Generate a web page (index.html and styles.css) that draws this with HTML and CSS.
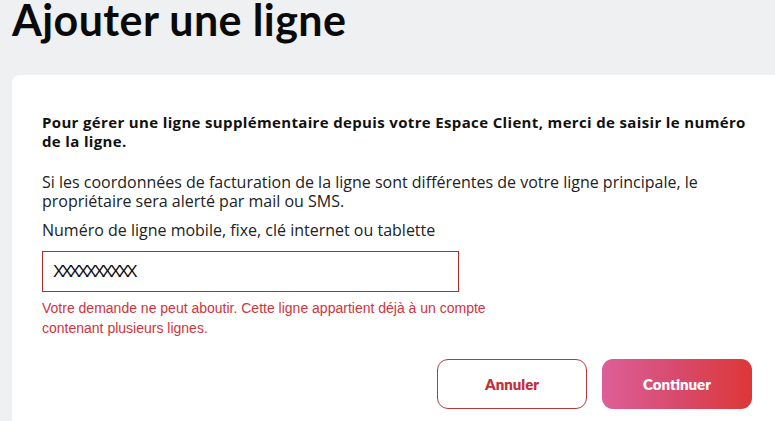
FILE: index.html
```html
<!DOCTYPE html>
<html lang="fr">
<head>
<meta charset="utf-8">
<link rel="stylesheet" href="styles.css">
</head>
<body>
<main class="page">
  <h1 class="title">Ajouter une ligne</h1>
  <section class="card">
    <p class="lead">Pour gérer une ligne supplémentaire depuis votre Espace Client, merci de saisir le numéro de la ligne.</p>
    <p class="info">Si les coordonnées de facturation de la ligne sont différentes de votre ligne principale, le propriétaire sera alerté par mail ou SMS.</p>
    <label class="label" for="num">Numéro de ligne mobile, fixe, clé internet ou tablette</label>
    <div class="field">
      <input id="num" class="input" type="text" value="XXXXXXXXXX">
    </div>
    <p class="error">Votre demande ne peut aboutir. Cette ligne appartient déjà à un compte contenant plusieurs lignes.</p>
    <div class="actions">
      <button class="btn btn-secondary" type="button">Annuler</button>
      <button class="btn btn-primary" type="button">Continuer</button>
    </div>
  </section>
</main>
</body>
</html>
```
FILE: styles.css
```css
html, body {
  margin: 0;
  padding: 0;
}
body {
  background: #eff0f2;
  font-family: "Open Sans", "Noto Sans", sans-serif;
  color: #111;
  width: 775px;
  height: 421px;
  overflow: hidden;
}
.page {
  padding: 0 0 0 12px;
}
.title {
  margin: 0;
  font-family: "Lato", sans-serif;
  font-size: 43px;
  line-height: 40px;
  padding-top: 0;
  font-weight: 700;
  color: #0a0a0a;
  letter-spacing: 0.4px;
}
.card {
  margin-top: 35px;
  background: #fff;
  border-top-left-radius: 8px;
  padding: 38px 0 30px 30px;
  width: 800px;
  box-sizing: border-box;
}
.lead {
  margin: 0;
  width: 712px;
  font-size: 15px;
  line-height: 19px;
  font-weight: 700;
  letter-spacing: 0.35px;
  color: #111;
}
.info {
  margin: 22px 0 0;
  width: 680px;
  font-size: 16px;
  line-height: 19px;
  color: #222;
}
.label {
  display: block;
  margin-top: 9px;
  font-size: 16px;
  line-height: 20px;
  color: #222;
}
.field {
  margin-top: 11px;
  width: 417px;
}
.input {
  display: block;
  width: 100%;
  box-sizing: border-box;
  height: 41px;
  border: 1px solid #b8282f;
  padding: 0 10px;
  font-family: "Liberation Sans", Arial, sans-serif;
  font-size: 17px;
  letter-spacing: -3.2px;
  color: #111;
  outline: none;
  background: #fff;
}
.error {
  margin: 6px 0 0;
  width: 470px;
  font-family: "Liberation Sans", Arial, sans-serif;
  font-size: 14px;
  line-height: 20px;
  color: #d0343c;
}
.actions {
  display: flex;
  gap: 15px;
  margin-top: 21px;
  padding-left: 395px;
}
.btn {
  width: 150px;
  height: 50px;
  border-radius: 11px;
  font-family: "Lato", sans-serif;
  font-size: 15px;
  font-weight: 800;
  cursor: pointer;
}
.btn-secondary {
  background: #fff;
  border: 1px solid #b53a40;
  color: #c4303a;
}
.btn-primary {
  border: none;
  color: #fff;
  background: linear-gradient(90deg, #dd5f98 0%, #d84a6c 50%, #dd3737 100%);
}
```
